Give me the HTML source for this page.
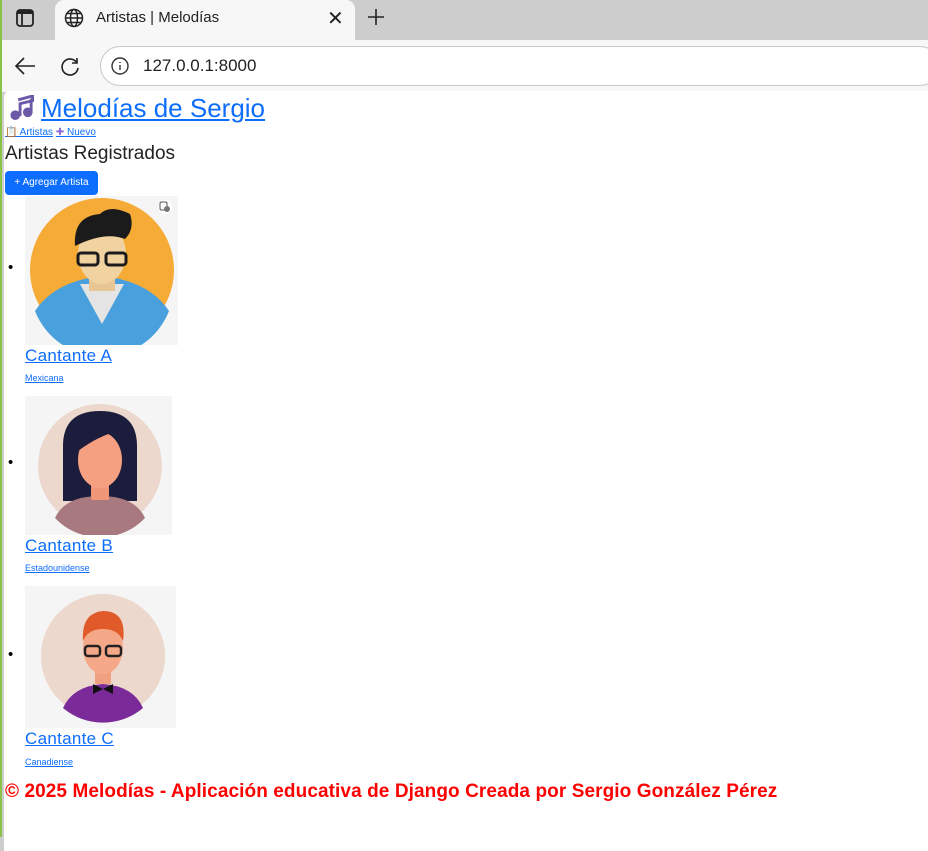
<!DOCTYPE html>
<html><head><meta charset="utf-8"><style>
*{margin:0;padding:0;box-sizing:border-box}
body{width:928px;height:837px;overflow:hidden;font-family:"Liberation Sans",sans-serif;background:#cdcdcd;position:relative}
.green{position:absolute;left:0;top:0;width:2px;height:837px;background:#8bc34a;z-index:5}
.tab{position:absolute;left:55px;top:0;width:300px;height:42px;background:#f7f7f7;border-radius:9px 9px 0 0}
.bar{position:absolute;left:2px;top:40px;width:926px;height:52px;background:#f7f7f7}
.url{position:absolute;left:100px;top:46px;width:840px;height:40px;border:1px solid #c8c8c8;border-radius:20px;background:#fff}
.page{position:absolute;left:4px;top:91px;width:930px;height:760px;background:#fff;border-radius:6px 0 0 0}
.t{position:absolute;white-space:nowrap}
a{color:#0d6efd;text-decoration:underline}
</style></head><body>
<div class="green"></div>
<div class="tab"></div>
<svg class="t" style="left:15px;top:8px" width="20" height="20" viewBox="0 0 20 20"><rect x="2" y="2" width="16" height="16" rx="3" fill="none" stroke="#222" stroke-width="1.8"/><line x1="7" y1="3" x2="7" y2="17" stroke="#222" stroke-width="1.8"/><rect x="2" y="2" width="16" height="4" fill="#222"/></svg>
<svg class="t" style="left:64px;top:8px" width="20" height="20" viewBox="0 0 20 20" fill="none" stroke="#222" stroke-width="1.5"><circle cx="10" cy="10" r="8.5"/><ellipse cx="10" cy="10" rx="3.5" ry="8.5"/><line x1="1.5" y1="10" x2="18.5" y2="10"/><line x1="3" y1="5.5" x2="17" y2="5.5"/><line x1="3" y1="14.5" x2="17" y2="14.5"/></svg>
<div class="t" style="left:96px;top:9px;font-size:15px;color:#222">Artistas | Melodías</div>
<div class="t" style="left:327px;top:6px;font-size:20px;color:#222">✕</div>
<svg class="t" style="left:366px;top:7px" width="20" height="20"><path d="M10 2v16M2 10h16" stroke="#222" stroke-width="1.6"/></svg>
<div class="bar"></div>
<svg class="t" style="left:13px;top:55px" width="24" height="22" viewBox="0 0 24 22" fill="none" stroke="#222" stroke-width="1.6"><path d="M22 11H3M11 3l-8 8 8 8"/></svg>
<svg class="t" style="left:59px;top:55px" width="22" height="22" viewBox="0 0 22 22" fill="none" stroke="#222" stroke-width="1.6"><path d="M18 8A8 8 0 1 0 19 13"/><path d="M18 3v5h-5"/></svg>
<div class="url"></div>
<svg class="t" style="left:110px;top:56px" width="20" height="20" viewBox="0 0 20 20" fill="none" stroke="#333" stroke-width="1.4"><circle cx="10" cy="10" r="8"/><path d="M10 9v5M10 6v1"/></svg>
<div class="t" style="left:143px;top:56px;font-size:17px;color:#222">127.0.0.1:8000</div>
<div class="page"></div>
<a class="t" style="left:5px;top:92px;font-size:26px;line-height:32px"><span style="display:inline-block;width:36px"></span>Melodías de Sergio</a>
<svg class="t" style="left:8px;top:95px" width="28" height="25" viewBox="0 0 28 26"><path d="M10 5l15-4v5l-13 3v13" stroke="#6b5aa8" stroke-width="3" fill="none"/><path d="M23.5 4v14" stroke="#6b5aa8" stroke-width="3"/><circle cx="7" cy="21" r="5" fill="#6b5aa8"/><circle cx="20" cy="18" r="5" fill="#6b5aa8"/></svg>
<div class="t" style="left:5px;top:127px;font-size:10px"><a>📋 Artistas</a> <a><span style="color:#8a6ad0">✚</span> Nuevo</a></div>
<div class="t" style="left:5px;top:143px;font-size:19px;color:#222">Artistas Registrados</div>
<div class="t" style="left:5px;top:171px;width:93px;height:24px;background:#0d6efd;border-radius:4px;color:#fff;font-size:10px;line-height:24px;text-align:center">+ Agregar Artista</div>

<div class="t" style="left:8px;top:259px;font-size:15px">•</div>
<svg class="t" style="left:25px;top:196px" width="153" height="149" viewBox="0 0 153 149"><rect width="153" height="149" fill="#f5f5f5"/><circle cx="77" cy="74" r="72" fill="#f5ab35"/><path d="M10 115q20-30 67-35q47 5 67 35a72 72 0 0 1-134 0z" fill="#4aa0dc"/><path d="M55 88l22 40 22-40z" fill="#e4e4e4"/><rect x="64" y="65" width="26" height="30" fill="#e8c594"/><ellipse cx="77" cy="58" rx="24" ry="30" fill="#f0d3a0"/><path d="M50 50q-2-30 25-32q10-10 30 0q5 15-5 25q-20-8-50 7z" fill="#1b1b1b"/><rect x="53" y="57" width="20" height="12" rx="3" fill="none" stroke="#1b1b1b" stroke-width="3"/><rect x="81" y="57" width="20" height="12" rx="3" fill="none" stroke="#1b1b1b" stroke-width="3"/><circle cx="140" cy="11" r="7" fill="#fff"/><rect x="135" y="6" width="7" height="8" rx="1.5" fill="none" stroke="#555" stroke-width="1"/><circle cx="142" cy="13" r="3" fill="#777"/></svg>
<a class="t" style="left:25px;top:346px;font-size:17px;letter-spacing:0.3px">Cantante A</a>
<a class="t" style="left:25px;top:373px;font-size:9px">Mexicana</a>

<div class="t" style="left:8px;top:454px;font-size:15px">•</div>
<svg class="t" style="left:25px;top:396px" width="147" height="139" viewBox="0 0 147 139"><rect width="147" height="139" fill="#f5f5f5"/><circle cx="75" cy="70" r="62" fill="#ecd8cc"/><path d="M38 50q0-35 37-35q37 0 37 35v55h-74z" fill="#1c1c3c"/><path d="M30 122q10-22 45-22q35 0 45 22a62 62 0 0 1-90 0z" fill="#a87a80"/><rect x="66" y="80" width="18" height="24" fill="#f09678"/><ellipse cx="75" cy="64" rx="22" ry="28" fill="#f5a080"/><path d="M53 55q5-30 40-20q-20 5-40 20z" fill="#1c1c3c"/></svg>
<a class="t" style="left:25px;top:536px;font-size:17px;letter-spacing:0.3px">Cantante B</a>
<a class="t" style="left:25px;top:563px;font-size:9px">Estadounidense</a>

<div class="t" style="left:8px;top:646px;font-size:15px">•</div>
<svg class="t" style="left:25px;top:586px" width="151" height="142" viewBox="0 0 151 142"><rect width="151" height="142" fill="#f5f5f5"/><circle cx="78" cy="70" r="62" fill="#ecd8cc"/><path d="M38 122q10-22 40-24q30 2 40 24a62 62 0 0 1-80 0z" fill="#7b2a9a"/><rect x="70" y="78" width="16" height="20" fill="#f0a080"/><ellipse cx="78" cy="62" rx="20" ry="26" fill="#f5a888"/><path d="M58 55q-2-28 20-30q24 0 20 30q-5-12-20-12q-15 0-20 12z" fill="#e05a2a"/><rect x="60" y="60" width="15" height="10" rx="3" fill="none" stroke="#222" stroke-width="2.5"/><rect x="81" y="60" width="15" height="10" rx="3" fill="none" stroke="#222" stroke-width="2.5"/><path d="M68 98l10 5 10-5v10l-10-5-10 5z" fill="#111"/></svg>
<a class="t" style="left:25px;top:729px;font-size:17px;letter-spacing:0.3px">Cantante C</a>
<a class="t" style="left:25px;top:757px;font-size:9px">Canadiense</a>

<div class="t" style="left:5px;top:781px;font-size:19px;font-weight:bold;color:#ff0000;letter-spacing:0.09px">© 2025 Melodías - Aplicación educativa de Django Creada por Sergio González Pérez</div>
</body></html>
